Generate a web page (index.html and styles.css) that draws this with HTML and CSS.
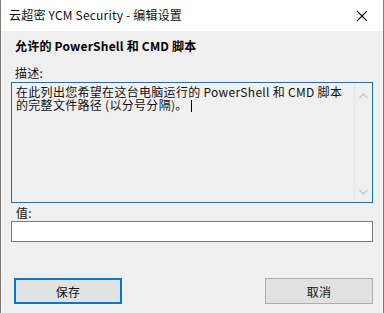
FILE: index.html
```html
<!DOCTYPE html>
<html lang="zh-CN">
<head>
<meta charset="utf-8">
<link rel="stylesheet" href="styles.css">
</head>
<body>
<div class="window">
  <div class="titlebar">
    <span class="title">云超密 YCM Security - 编辑设置</span>
    <svg class="close" width="12" height="12" viewBox="0 0 12 12"><path d="M1 1 L11 11 M11 1 L1 11" stroke="#111" stroke-width="1.1" fill="none"/></svg>
  </div>
  <div class="content">
    <div class="heading">允许的 PowerShell 和 CMD 脚本</div>
    <div class="label">描述:</div>
    <div class="textarea">
      <div class="text">在此列出您希望在这台电脑运行的 PowerShell 和 CMD 脚本的完整文件路径 (以分号分隔)。<span class="caret"></span></div>
      <div class="scroll">
        <svg width="9" height="6" viewBox="0 0 9 6"><path d="M0.5 5 L4.5 1 L8.5 5" stroke="#c3c3c3" stroke-width="1.3" fill="none"/></svg>
        <svg width="9" height="6" viewBox="0 0 9 6"><path d="M0.5 1 L4.5 5 L8.5 1" stroke="#c3c3c3" stroke-width="1.3" fill="none"/></svg>
      </div>
    </div>
    <div class="label label2">值:</div>
    <div class="input"></div>
    <div class="buttons">
      <div class="btn primary">保存</div>
      <div class="btn">取消</div>
    </div>
  </div>
</div>
</body>
</html>
```
FILE: styles.css
```css
html, body {
  margin: 0;
  padding: 0;
}
body {
  width: 384px;
  height: 313px;
  overflow: hidden;
  font-family: "Noto Sans CJK SC", "Liberation Sans", sans-serif;
  font-size: 12px;
  letter-spacing: 0.2px;
  color: #000;
}
.window {
  box-sizing: border-box;
  width: 384px;
  height: 313px;
  background: #f0f0f0;
  border-left: 1px solid #7a7a7a;
  border-right: 1px solid #7a7a7a;
}
.titlebar {
  height: 31px;
  background: #fff;
  display: flex;
  align-items: center;
  justify-content: space-between;
  padding: 0 15px 0 8px;
}
.title {
  font-size: 12px;
  line-height: 16px;
  color: #111;
  margin-top: -1px;
}
.close {
  display: block;
}
.content {
  padding: 0 10px 0 10px;
}
.heading {
  font-weight: bold;
  font-size: 12px;
  line-height: 16px;
  margin: 7px 0 0 4px;
}
.label {
  margin: 12px 0 0 4px;
  line-height: 14px;
  color: #111;
}
.textarea {
  box-sizing: border-box;
  height: 121px;
  border: 1px solid #0078d7;
  display: flex;
  margin-top: 2px;
}
.text {
  flex: 1;
  padding: 2px 8px 0 4px;
  line-height: 13px;
  color: #111;
  letter-spacing: 0.3px;
}
.caret {
  display: inline-block;
  width: 1px;
  height: 12px;
  background: #000;
  vertical-align: -2px;
  margin-left: 3px;
}
.scroll {
  width: 17px;
  border-left: 1px solid #e4e4e4;
  display: flex;
  flex-direction: column;
  justify-content: space-between;
  align-items: center;
  padding: 10px 0 7px;
}
.scroll svg {
  display: block;
}
.label2 {
  margin-top: 2px;
  margin-left: 5px;
  line-height: 16px;
}
.input {
  box-sizing: border-box;
  height: 21px;
  background: #fff;
  border: 1px solid #7a7a7a;
  margin-top: 0;
}
.buttons {
  display: flex;
  justify-content: space-between;
  margin: 36px 0 0 3px;
}
.btn {
  box-sizing: border-box;
  width: 108px;
  height: 26px;
  background: #e1e1e1;
  border: 1px solid #adadad;
  display: flex;
  align-items: center;
  justify-content: center;
  color: #111;
}
.btn.primary {
  border: 2px solid #0078d7;
}
```
